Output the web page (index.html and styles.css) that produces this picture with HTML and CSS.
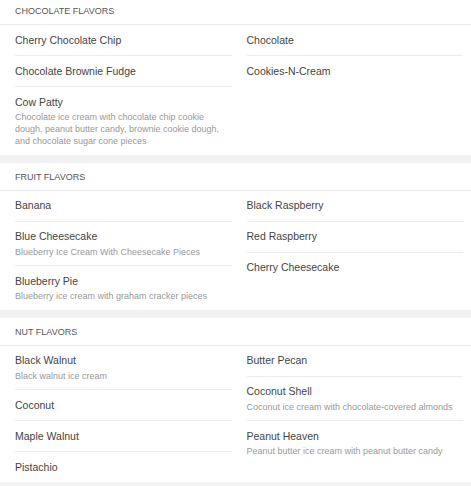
FILE: index.html
```html
<!DOCTYPE html>
<html>
<head>
<meta charset="utf-8">
<link rel="stylesheet" href="styles.css">
</head>
<body>
<div class="menu">
  <section class="section">
    <div class="section-header">CHOCOLATE FLAVORS</div>
    <div class="columns">
      <div class="col">
        <div class="item"><div class="title">Cherry Chocolate Chip</div></div>
        <div class="item"><div class="title">Chocolate Brownie Fudge</div></div>
        <div class="item"><div class="title">Cow Patty</div><div class="desc">Chocolate ice cream with chocolate chip cookie dough, peanut butter candy, brownie cookie dough, and chocolate sugar cone pieces</div></div>
      </div>
      <div class="col">
        <div class="item"><div class="title">Chocolate</div></div>
        <div class="item"><div class="title">Cookies-N-Cream</div></div>
      </div>
    </div>
  </section>
  <section class="section">
    <div class="section-header">FRUIT FLAVORS</div>
    <div class="columns">
      <div class="col">
        <div class="item"><div class="title">Banana</div></div>
        <div class="item"><div class="title">Blue Cheesecake</div><div class="desc">Blueberry Ice Cream With Cheesecake Pieces</div></div>
        <div class="item"><div class="title">Blueberry Pie</div><div class="desc">Blueberry ice cream with graham cracker pieces</div></div>
      </div>
      <div class="col">
        <div class="item"><div class="title">Black Raspberry</div></div>
        <div class="item"><div class="title">Red Raspberry</div></div>
        <div class="item"><div class="title">Cherry Cheesecake</div></div>
      </div>
    </div>
  </section>
  <section class="section">
    <div class="section-header">NUT FLAVORS</div>
    <div class="columns">
      <div class="col">
        <div class="item"><div class="title">Black Walnut</div><div class="desc">Black walnut ice cream</div></div>
        <div class="item"><div class="title">Coconut</div></div>
        <div class="item"><div class="title">Maple Walnut</div></div>
        <div class="item"><div class="title">Pistachio</div></div>
      </div>
      <div class="col">
        <div class="item"><div class="title">Butter Pecan</div></div>
        <div class="item"><div class="title">Coconut Shell</div><div class="desc">Coconut ice cream with chocolate-covered almonds</div></div>
        <div class="item"><div class="title">Peanut Heaven</div><div class="desc">Peanut butter ice cream with peanut butter candy</div></div>
      </div>
    </div>
  </section>
</div>
</body>
</html>
```
FILE: styles.css
```css
html, body {
  margin: 0;
  padding: 0;
  background: #f2f2f2;
  font-family: "Liberation Sans", Arial, sans-serif;
}
.menu {
  margin-top: -3px;
  display: flex;
  flex-direction: column;
  gap: 8px;
}
.section {
  background: #fff;
}
.section-header {
  height: 27px;
  line-height: 28px;
  padding-left: 15px;
  font-size: 9px;
  color: #555;
  border-bottom: 1px solid #ebebeb;
}
.columns {
  display: grid;
  grid-template-columns: 1fr 1fr;
  column-gap: 15px;
  padding: 0 8px 0 15px;
}
.col {
  display: flex;
  flex-direction: column;
}
.item {
  padding: 7.5px 0;
  border-bottom: 1px solid #ececec;
}
.item:last-child {
  border-bottom: none;
}
.title {
  font-size: 10.5px;
  line-height: 15px;
  color: #444;
}
.desc {
  margin-top: 1.5px;
  font-size: 9px;
  line-height: 12px;
  color: #999;
}
```
